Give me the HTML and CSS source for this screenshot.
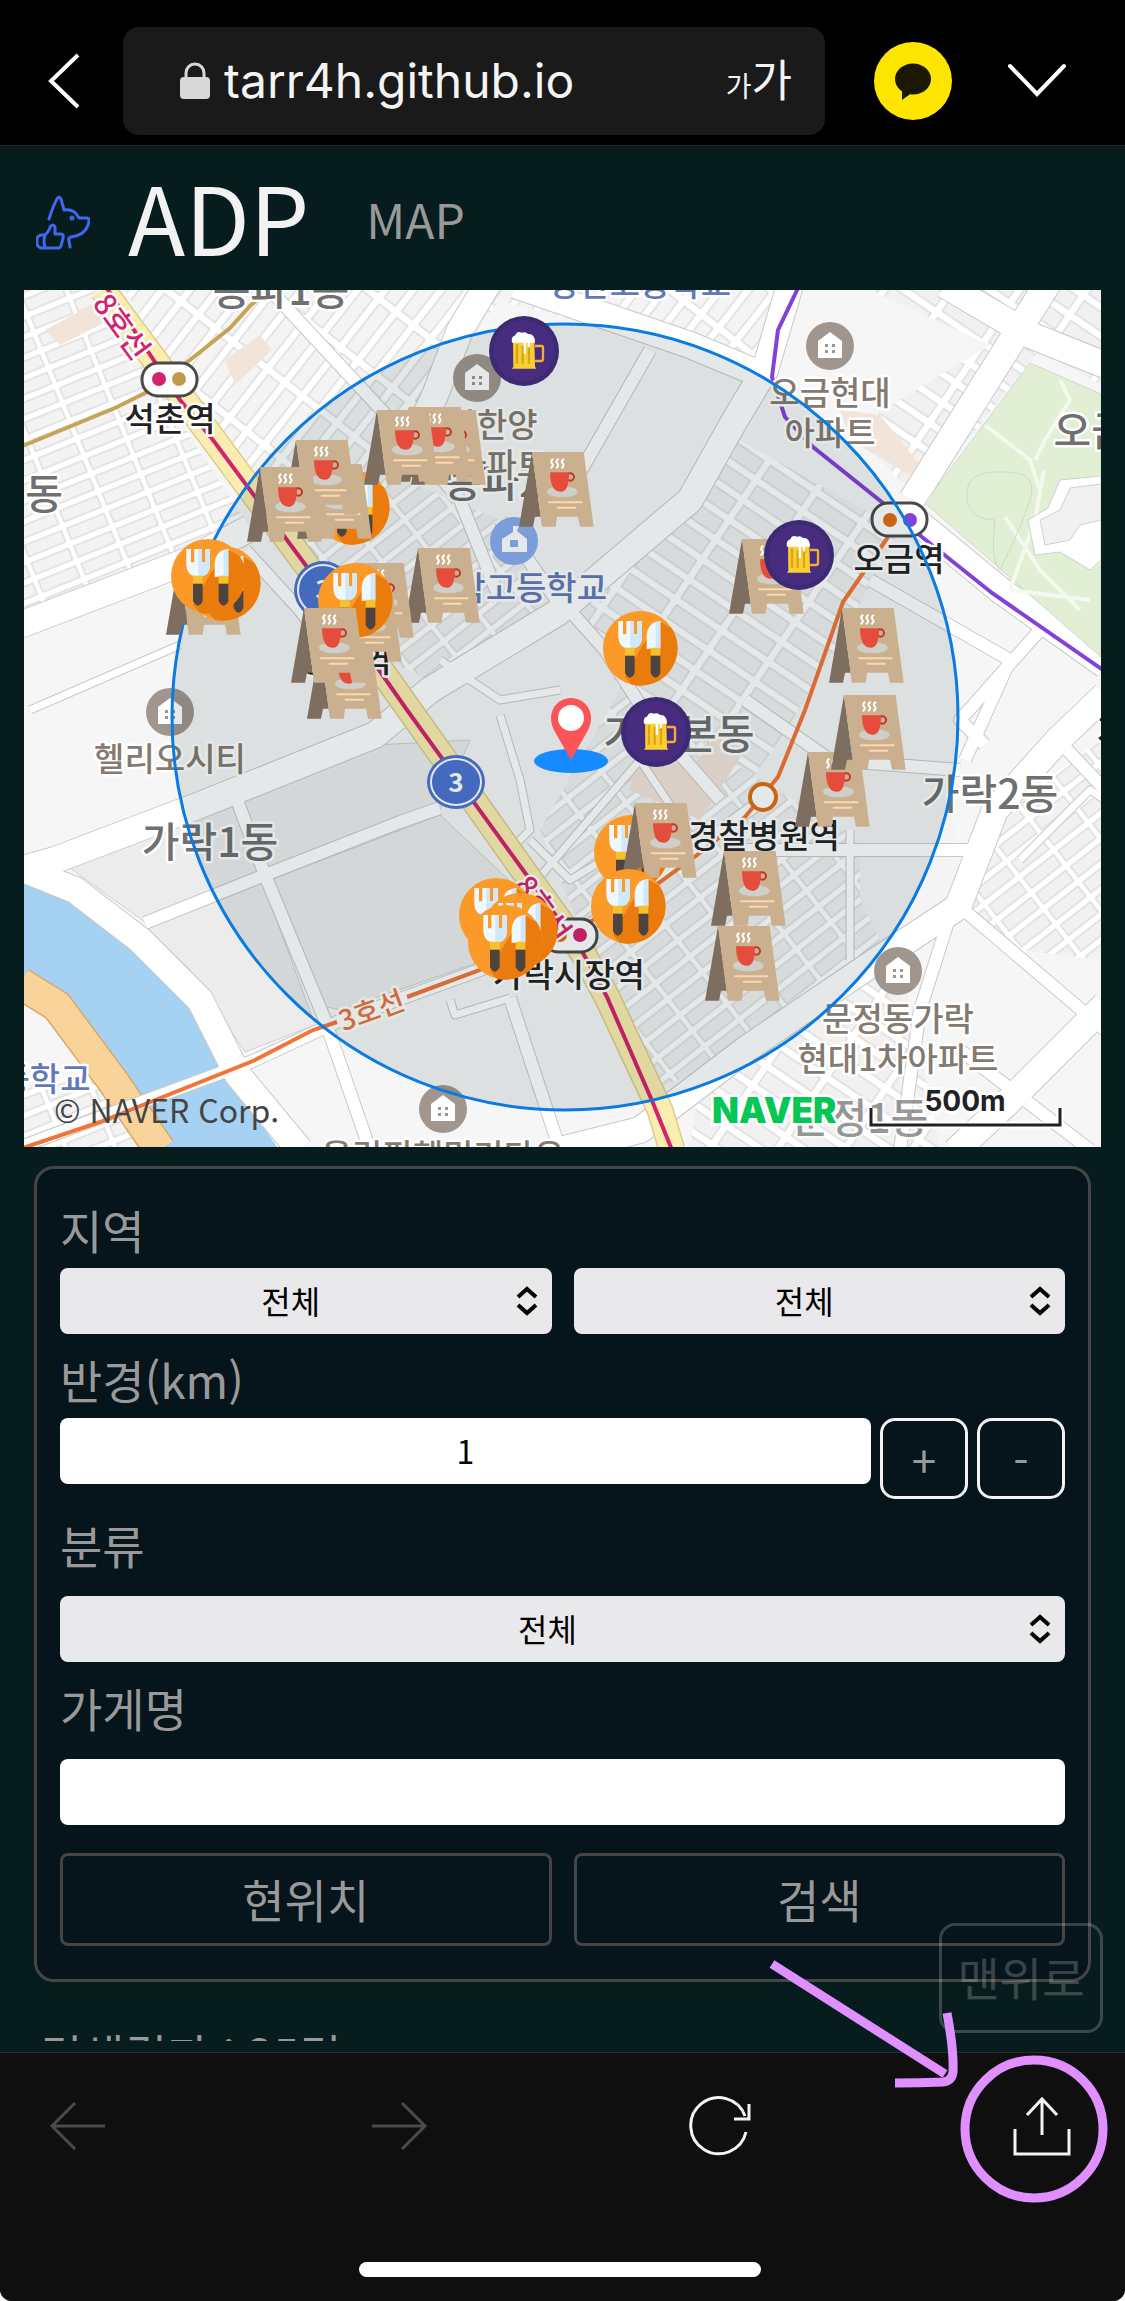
FILE: index.html
```html
<!DOCTYPE html>
<html lang="ko">
<head>
<meta charset="utf-8">
<meta name="viewport" content="width=device-width, initial-scale=1">
<title>ADP MAP</title>
<link rel="stylesheet" href="styles.css">
</head>
<body>
<div class="screen">
  <header class="topbar">
    <button class="icon-btn" type="button" aria-label="뒤로"><svg width="36" height="60" viewBox="0 0 36 60"><path d="M32 4 5 30 32 56" fill="none" stroke="#fff" stroke-width="4"/></svg></button>
    <div class="urlbar">
      <svg class="lock" width="30" height="38" viewBox="0 0 30 38"><rect y="15" width="30" height="22" rx="4" fill="#d8d8d8"/><path d="M6 17V11a9 9 0 0 1 18 0v6" fill="none" stroke="#d8d8d8" stroke-width="3"/></svg>
      <span class="url">tarr4h.github.io</span>
      <button class="text-size" type="button" aria-label="글자 크기"><small>가</small><span>가</span></button>
    </div>
    <button class="icon-btn talk" type="button" aria-label="채팅"><svg width="78" height="78" viewBox="0 0 78 78"><circle cx="39" cy="39" r="39" fill="#fee500"/><ellipse cx="39" cy="37" rx="18" ry="15.500" fill="#1b1903"/><path d="M28 44v14l11-8z" fill="#1b1903"/></svg></button>
    <button class="icon-btn" type="button" aria-label="닫기"><svg width="60" height="36" viewBox="0 0 60 36"><path d="M3 3 30 31 57 3" fill="none" stroke="#fff" stroke-width="4" stroke-linecap="round"/></svg></button>
  </header>

  <div class="viewport">
    <main class="page">
      <nav class="site-head">
        <svg width="54" height="56" viewBox="0 0 54 56" fill="none" stroke="#3f68ee" stroke-width="3" stroke-linecap="round" stroke-linejoin="round"><path d="M13 24Q17 11 21 4q2-4 4 0l3 11q10-2 15 8h8q2 0 2 3-2 14-18 16-3 1-2 4l1 6"/><circle cx="36" cy="23" r="1"/><path d="M9 40q5-5 5-8 3-4 5 0v7h6q3 0 2 4l-2 8q-1 2-3 2H5q-4-1-4-5v-4q0-3 4-4h4q-2 6 0 13"/></svg>
        <a class="brand" href="#">ADP</a>
        <a class="nav-link" href="#map">MAP</a>
      </nav>

      <svg id="map" class="map" viewBox="24 290 1077 857" role="img" aria-label="지도">
        <defs>
          <pattern id="b1" width="46" height="19" patternUnits="userSpaceOnUse" patternTransform="rotate(-22)"><rect width="46" height="19" fill="#fff"/><rect x="2" y="2" width="40" height="12" fill="#f3f3f3" stroke="#cfcfcf"/></pattern>
          <pattern id="b2" width="62" height="22" patternUnits="userSpaceOnUse" patternTransform="rotate(-52)"><rect width="62" height="22" fill="#fff"/><rect x="2" y="2" width="54" height="14" fill="#f4f4f4" stroke="#cfcfcf"/></pattern>
          <pattern id="b3" width="56" height="24" patternUnits="userSpaceOnUse" patternTransform="rotate(34)"><rect width="56" height="24" fill="#fff"/><rect x="3" y="3" width="48" height="16" fill="#f1f1f1" stroke="#cfcfcf"/></pattern>
          <pattern id="b4" width="44" height="20" patternUnits="userSpaceOnUse" patternTransform="rotate(-38)"><rect width="44" height="20" fill="#fff"/><rect x="2" y="2" width="38" height="13" fill="#f1f1f1" stroke="#cfcfcf"/></pattern>
          <g id="wide">
            <path d="M20 870 55 860 200 805 375 735 430 690 557 613 690 500 735 420 765 370 790 285"/>
            <path d="M490 280 460 330 435 395 400 470"/><path d="M515 285 690 345 762 375"/>
            <path d="M1050 280 912 500"/><path d="M945 285 1030 335 1105 365"/>
            <path d="M1105 695 1058 740 995 810 958 907 870 965 745 1050 640 1130 560 1150"/>
            <path d="M1105 1005 1010 1100 955 1152"/><path d="M20 868 75 890 140 940 200 1000 238 1075 300 1150"/>
            <path d="M915 520 1000 590 1105 665"/><path d="M20 625 190 560 250 528"/>
          </g>
          <g id="mid">
            <path d="M145 923 265 875 400 822 440 808"/><path d="M237 800 265 875 325 1020 370 1150"/><path d="M20 1147 253 1061 337 1022 480 970 590 925 763 800"/>
            <path d="M510 998 560 1150"/><path d="M650 350 570 490"/><path d="M565 605 605 650 650 720 720 800"/><path d="M745 700 830 760 960 770"/>
            <path d="M500 520 560 605"/><path d="M958 905 1105 1030"/><path d="M955 900 920 1010 900 1150"/><path d="M870 580 1010 660 965 760"/><path d="M960 1050 1090 1150"/>
            <path d="M1058 740 1105 790"/><path d="M740 850 970 850"/><path d="M245 550 300 610 330 650"/><path d="M1040 630 960 720 985 745"/><path d="M270 290 400 430 460 500 500 600"/>
          </g>
          <g id="small">
            <path d="M500 715 520 780 530 830 500 860"/><path d="M440 660 500 700 560 690"/><path d="M530 840 570 880 620 850"/><path d="M30 710 180 645"/><path d="M1020 860 1090 790 1105 800"/><path d="M450 1000 455 1015 510 998"/><path d="M520 900 640 760 700 850"/><path d="M850 830V960"/>
          </g>
          <symbol id="cafe" viewBox="0 0 225 225"><path d="M39 0 0 224h42l6-30h18l3 30z" fill="#7d6e5f"/><path d="M39 0h155l30 224h-41l-6-30h-63l-4 30H69z" fill="#cbb08f"/><ellipse cx="130" cy="119" rx="46" ry="17" fill="#cfcfc9"/><circle cx="154" cy="75" r="11" fill="none" stroke="#bd372c" stroke-width="6"/><path d="M93 61h57q0 58-22 58-34 4-35-58z" fill="#e64c3c"/><path d="M101 22q-8 6-2 12t-2 13M117 22q-8 6-2 12t-2 13M133 22q-8 6-2 12t-2 13" fill="none" stroke="#fff" stroke-width="6" stroke-linecap="round"/><path d="M90 151h98M116 167h52" stroke="#fdd7ad" stroke-width="6" stroke-linecap="round"/></symbol>
          <symbol id="food" viewBox="0 0 225 225"><circle cx="112" cy="112" r="112" fill="#fb9a28"/><path d="M172 32 206 52a112 112 0 0 1-120 169l-20-24 50-90z" fill="#ea7b0d"/><path d="M46 30h14v40h10V30h23v40h10V30h14v45q0 38-35 38T46 75z" fill="#eef8ff"/><path d="M82 30h11v40h10V30h14v45q0 38-35 38z" fill="#cfe8fb"/><path d="M172 30v83h-41V75q2-42 41-45z" fill="#eef8ff"/><path d="M158 34 172 30v83h-14z" fill="#cfe8fb"/><path d="M66 110h29v24H66zM143 110h29v24h-29z" fill="#f7c02e"/><path d="M66 134h29v52q-14 28-29 0zM143 134h29v52q-14 28-29 0z" fill="#4d4340"/></symbol>
          <symbol id="beer" viewBox="0 0 210 210"><circle cx="105" cy="105" r="105" fill="#3b2a74"/><circle cx="105" cy="105" r="92" fill="#472c7f"/><path d="M138 90h20q4 0 4 5v34q0 6-6 6h-18" fill="none" stroke="#f1ae35" stroke-width="7"/><path d="M72 70h64l2 82 4 6H69l4-6z" fill="#f9cf31"/><path d="M84 85v58M101 90v53M120 90v53" stroke="#dda516" stroke-width="7"/><path d="M69 80q-4-18 10-22 5-15 20-8 12-3 18 4 21-2 21 26h-15v14h-7V80h-5v34h-7V80z" fill="#fff"/></symbol>
          <symbol id="house" viewBox="0 0 48 48"><circle cx="24" cy="24" r="24" fill="#a0968e"/><path d="M12 36V19l12-9 12 9v17z" fill="#fff"/><path d="M19 22h3v3h-3zM26 22h3v3h-3zM19 28h3v3h-3zM26 28h3v3h-3z" fill="#a0968e"/></symbol>
        </defs>

        <rect x="24" y="290" width="1077" height="857" fill="#f6f6f6"/>
        <path d="M24 290H95L245 520 190 555 24 620z" fill="url(#b1)"/>
        <path d="M125 290H400L440 380 380 500 300 560 245 500z" fill="url(#b2)"/>
        <path d="M400 290H790L760 370 500 300 440 380z" fill="url(#b2)"/>
        <path d="M490 325 690 365 720 420 650 500 560 600 400 470 440 400z" fill="#f6f6f6"/>
        <path d="M380 470 500 520 550 600 430 680 340 640 300 540z" fill="url(#b4)"/>
        <path d="M870 290H1101V385L1040 350 920 500 850 430 990 345z" fill="url(#b3)"/>
        <path d="M740 440 900 530 840 640 780 740 700 850 600 650 560 600z" fill="url(#b3)"/>
        <path d="M870 600 960 670 950 750 850 690z" fill="#f6f6f6"/>
        <path d="M540 830 620 690 760 780 860 840 960 900 760 1050 650 1090 610 1000z" fill="url(#b4)"/>
        <path d="M860 765H950L960 910 890 960 860 900z" fill="#f4f4f4"/>
        <path d="M990 820 1101 740V960L1020 950 960 905z" fill="url(#b4)"/>
        <path d="M700 1080 900 960 940 1147H690z" fill="url(#b3)"/>
        <path d="M45 330 100 300 110 320 60 345zM225 360 260 335 272 350 235 385zM640 740 690 770 720 730 745 750 700 820 630 790zM840 410 880 415 920 465 910 475 850 440z" fill="#f3e4da"/>
        <path d="M70 868 235 804 265 875 145 922zM147 928 262 880 315 1025 245 1052 190 970zM243 800 375 745 470 740 440 810 268 870zM270 880 440 815 530 900 500 955 340 1010 320 1005z" fill="#ececec" stroke="#d0d0d0"/>
        <path d="M24 885 40 879 82 900 133 943 197 1010 218 1060 277 1147H24z" fill="#a5d1f2"/>
        <path d="M24 1000 60 1030 120 1110 145 1147H24z" fill="#f6f6f6"/>
        <path d="M24 1085 95 1072 125 1105 140 1147H24z" fill="url(#b1)"/>
        <path d="M20 983 57 1006 112 1080 160 1150" fill="none" stroke="#dda763" stroke-width="33"/>
        <path d="M20 983 57 1006 112 1080 160 1150" fill="none" stroke="#f9d49a" stroke-width="30"/>
        <g fill="none" stroke-linejoin="round">
          <g stroke="#c9c9c9"><use href="#small" stroke-width="9"/><use href="#mid" stroke-width="14"/><use href="#wide" stroke-width="28"/></g>
          <g stroke="#fff"><use href="#small" stroke-width="7"/><use href="#mid" stroke-width="12"/><use href="#wide" stroke-width="26"/></g>
        </g>
        <path d="M1030 363 1101 394V657L925 503z" fill="#e1efd5" stroke="#cfd8c8"/>
        <path d="M985 425 1030 460 1040 490M1044 470 1035 520 1010 590M1005 517 1040 570 1080 610M1010 590 1090 600M1060 380 1070 400 1045 440 1035 460" fill="none" stroke="#f4f8ef" stroke-width="4"/>
        <path d="M968 505Q960 470 1000 472 1040 470 1030 500 1020 530 1000 570 990 560 995 520 975 520 968 505z" fill="none" stroke="#cfdcc6"/>
        <path d="M1101 476 1060 480 1048 508 1028 520 1035 555 1060 552 1090 570 1101 560z" fill="#fff" stroke="#d0d0d0"/>
        <path d="M1101 484 1070 488 1060 510 1040 520 1045 545 1070 540 1080 525 1101 520z" fill="#f1f1f1" stroke="#d0d0d0"/>

        <path d="M103 290 310 570 523 870 583 953 607 997 660 1110 672 1150" fill="none" stroke="#dccd8c" stroke-width="27"/>
        <path d="M103 290 310 570 523 870 583 953 607 997 660 1110 672 1150" fill="none" stroke="#fbedb0" stroke-width="24"/>
        <g fill="none" stroke-width="4">
          <path d="M20 447 115 408 145 393 190 360 230 328 250 306 272 286" stroke="#c7a355"/>
          <path d="M103 282 145 347 180 400 213 440 307 567 407 710 523 870 583 953 607 997 653 1103 672 1150" stroke="#d4236d"/>
          <path d="M20 1149 100 1122 253 1061 313 1030 337 1022M407 997 480 970 593 920 660 882 697 855 745 817 778 777 805 710 843 602 888 537" stroke="#f27438"/>
          <path d="M799 286 778 330 772 377 785 417 813 447 883 503 922 537 992 593 1103 670" stroke="#8341d8"/>
        </g>
        <circle cx="763" cy="797" r="13" fill="#fff" stroke="#df6e12" stroke-width="4"/>
        <g fill="#fff" stroke="#4a4a4a" stroke-width="3"><rect x="142" y="363" width="55" height="33" rx="16"/><rect x="872" y="503" width="55" height="33" rx="16"/><rect x="542" y="919" width="55" height="33" rx="16"/></g>
        <circle cx="159" cy="379" r="7" fill="#d4236d"/><circle cx="179" cy="379" r="7" fill="#c09a4d"/><circle cx="890" cy="520" r="7" fill="#df6e12"/><circle cx="910" cy="520" r="7" fill="#8341d8"/><circle cx="560" cy="935" r="7" fill="#df6e12"/><circle cx="580" cy="935" r="7" fill="#d4236d"/>
        <g fill="#4c73d2"><circle cx="323" cy="590" r="29"/><ellipse cx="456" cy="782" rx="29" ry="27"/></g>
        <g fill="none" stroke="#fff" stroke-width="2"><circle cx="323" cy="590" r="25"/><ellipse cx="456" cy="782" rx="25" ry="23"/></g>
        <g class="num"><text x="323" y="599">3</text><text x="456" y="792">3</text></g>
        <use href="#house" x="453" y="354" width="48" height="48"/><use href="#house" x="806" y="322" width="48" height="48"/><use href="#house" x="146" y="688" width="48" height="48"/><use href="#house" x="419" y="1085" width="48" height="48"/><use href="#house" x="874" y="947" width="48" height="48"/>
        <circle cx="514" cy="541" r="24" fill="#8aadf0"/><path d="M502 552v-13l11-7v-6h6l-2 5 10 8v13z" fill="#fff"/><rect x="510" y="540" width="8" height="7" fill="#8aadf0"/>

        <g class="lbl station"><text x="170" y="431">석촌역</text><text x="899" y="571">오금역</text><text x="569" y="987">가락시장역</text><text x="346" y="672">송파역</text><text x="764" y="848">경찰병원역</text><text x="1112" y="743">가</text></g>
        <g class="lbl district"><text x="281" y="305">송파1동</text><text x="44" y="509">동</text><text x="512" y="497">송파2동</text><text x="1110" y="446">오금동</text><text x="210" y="857">가락1동</text><text x="679" y="749">가락본동</text><text x="990" y="809">가락2동</text><text x="860" y="1133" opacity=".7">문정1동</text></g>
        <g class="lbl place"><text x="477" y="437">송파한양</text><text x="477" y="477">2차아파트</text><text x="830" y="405">오금현대</text><text x="830" y="445">아파트</text><text x="170" y="771">헬리오시티</text><text x="898" y="1031">문정동가락</text><text x="898" y="1071">현대1차아파트</text><text x="443" y="1168">올림픽훼밀리타운</text></g>
        <g class="lbl school"><text x="640" y="296">방산고등학교</text><text x="516" y="600">가락고등학교</text><text x="45" y="1091">등학교</text></g>
        <g class="lbl line8"><text transform="translate(113 333) rotate(54)">8호선</text><text transform="translate(534 915) rotate(54)">8호선</text></g>
        <g class="lbl line3"><text transform="translate(375 1020) rotate(-20)">3호선</text></g>

        <circle cx="565" cy="717" r="393" fill="#00201c" fill-opacity=".1" stroke="#0a7be0" stroke-width="3"/>

        <ellipse cx="571" cy="761" rx="37" ry="12" fill="#168aff"/><path d="M571 760 555 732Q551 725 551 718a20 20 0 0 1 40 0q0 7-4 14z" fill="#fa5456"/><circle cx="571" cy="718" r="13" fill="#fff"/>

        <g>
          <use href="#food" x="315" y="470" width="75" height="75"/><use href="#cafe" x="297" y="464" width="75" height="75"/><use href="#cafe" x="283" y="440" width="75" height="75"/><use href="#cafe" x="247" y="467" width="75" height="75"/>
          <use href="#cafe" x="411" y="410" width="75" height="75"/><use href="#cafe" x="396" y="407" width="75" height="75"/><use href="#cafe" x="364" y="410" width="75" height="75"/>
          <use href="#cafe" x="519" y="452" width="75" height="75"/><use href="#cafe" x="405" y="548" width="75" height="75"/><use href="#cafe" x="339" y="563" width="75" height="75"/><use href="#cafe" x="327" y="587" width="75" height="75"/><use href="#food" x="318" y="563" width="75" height="75"/>
          <use href="#cafe" x="307" y="644" width="75" height="75"/><use href="#cafe" x="291" y="608" width="75" height="75"/>
          <use href="#cafe" x="166" y="560" width="75" height="75"/><use href="#food" x="186" y="546" width="75" height="75"/><use href="#food" x="171" y="539" width="75" height="75"/>
          <use href="#cafe" x="729" y="539" width="75" height="75"/><use href="#cafe" x="829" y="608" width="75" height="75"/><use href="#cafe" x="795" y="752" width="75" height="75"/><use href="#cafe" x="831" y="695" width="75" height="75"/>
          <use href="#cafe" x="711" y="851" width="75" height="75"/><use href="#cafe" x="705" y="926" width="75" height="75"/>
          <use href="#food" x="603" y="611" width="75" height="75"/><use href="#food" x="594" y="815" width="75" height="75"/><use href="#cafe" x="622" y="803" width="75" height="75"/><use href="#food" x="591" y="869" width="75" height="75"/>
          <use href="#food" x="459" y="878" width="75" height="75"/><use href="#food" x="483" y="893" width="75" height="75"/><use href="#food" x="468" y="905" width="75" height="75"/>
          <use href="#beer" x="489" y="316" width="70" height="70"/><use href="#beer" x="764" y="520" width="70" height="70"/><use href="#beer" x="621" y="697" width="70" height="70"/>
        </g>
        <text class="credit" x="54" y="1123">© NAVER Corp.</text>
        <text class="naver" x="712" y="1123">NAVER</text>
        <path d="M871 1108v17h189v-17" fill="none" stroke="#fff" stroke-width="7"/><path d="M871 1108v17h189v-17" fill="none" stroke="#222" stroke-width="3"/>
        <text class="scale" x="965" y="1111">500m</text>
      </svg>

      <form class="search" onsubmit="return false">
        <div class="field">
          <label for="sido">지역</label>
          <div class="row pair">
            <div class="select"><select id="sido"><option>전체</option></select><svg width="24" height="30" viewBox="0 0 24 30"><path d="M3 11 12 3l9 8M3 19l9 8 9-8"/></svg></div>
            <div class="select"><select id="gugun" aria-label="시군구"><option>전체</option></select><svg width="24" height="30" viewBox="0 0 24 30"><path d="M3 11 12 3l9 8M3 19l9 8 9-8"/></svg></div>
          </div>
        </div>
        <div class="field">
          <label for="radius">반경(km)</label>
          <div class="row radius"><input id="radius" type="text" value="1"><button class="step" type="button">+</button><button class="step" type="button">-</button></div>
        </div>
        <div class="field spaced">
          <label for="kind">분류</label>
          <div class="select"><select id="kind"><option>전체</option></select><svg width="24" height="30" viewBox="0 0 24 30"><path d="M3 11 12 3l9 8M3 19l9 8 9-8"/></svg></div>
        </div>
        <div class="field spaced">
          <label for="shop">가게명</label>
          <input id="shop" type="text">
        </div>
        <div class="row pair actions"><button type="button">현위치</button><button type="submit">검색</button></div>
      </form>
      <h2 class="result">검색결과 : 25건</h2>
    </main>
    <button class="to-top" type="button">맨위로</button>
  </div>

  <footer class="toolbar">
    <div class="tools">
      <button class="icon-btn" type="button" aria-label="이전"><svg width="60" height="60" viewBox="0 0 60 60" fill="none" stroke="#4a4a4a" stroke-width="3"><path d="M57 30H4M27 7 4 30l23 23"/></svg></button>
      <button class="icon-btn" type="button" aria-label="다음"><svg width="60" height="60" viewBox="0 0 60 60" fill="none" stroke="#4a4a4a" stroke-width="3"><path d="M3 30h53M33 7l23 23-23 23"/></svg></button>
      <button class="icon-btn" type="button" aria-label="새로고침"><svg width="62" height="60" viewBox="0 0 62 60" fill="none" stroke="#f4f4f4" stroke-width="3"><path d="M57 36A28 28 0 1 1 56 20M60 8v15H45"/></svg></button>
      <button class="icon-btn" type="button" aria-label="공유"><svg width="60" height="60" viewBox="0 0 60 60" fill="none" stroke="#f4f4f4" stroke-width="3"><path d="M3 33v25h54V33M30 39V4M15 19 30 3l15 16"/></svg></button>
    </div>
    <div class="home"></div>
    <svg class="note" width="360" height="250" viewBox="760 1955 360 250" fill="none" stroke="#e08fff" stroke-width="9"><path d="M772 1964 945 2074"/><path d="M947 2013Q954 2050 953 2072 952 2081 943 2082 920 2083 895 2083"/><circle cx="1034" cy="2129" r="69"/></svg>
  </footer>
</div>
</body>
</html>
```
FILE: styles.css
```css
* { box-sizing: border-box; }
body {
  margin: 0;
  background: #fff;
  color: #999;
  font-family: "Noto Sans CJK KR", "Noto Sans", sans-serif;
}
button, input, select { font: inherit; color: inherit; }
button { background: none; border: 0; padding: 0; cursor: pointer; }
svg { display: block; }
a { text-decoration: none; }

.screen {
  display: flex;
  flex-direction: column;
  height: 100vh;
  overflow: hidden;
  background: #071c1d;
  border-radius: 0 0 12px 12px;
}

/* browser bar */
.topbar {
  display: flex;
  align-items: center;
  flex: none;
  padding: 27px 58px 10px 46px;
  gap: 41px;
  background: #000;
  border-bottom: 1px solid #1f2a2b;
}
.urlbar {
  display: flex;
  align-items: center;
  flex: 1;
  height: 108px;
  padding: 0 33px 0 57px;
  border-radius: 16px;
  background: #1a1a1a;
  color: #f4f4f4;
}
.url { flex: 1; padding-left: 14px; font: 48px/60px Inter, sans-serif; }
.text-size { display: flex; align-items: baseline; font-size: 44px; line-height: 60px; }
.text-size small { font-size: 28px; }
.talk { margin: 0 14px 0 8px; }

/* page */
.viewport { position: relative; flex: 1; min-height: 0; padding-bottom: 11px; }
.page { height: 100%; overflow: hidden; }
.site-head { display: flex; align-items: center; height: 144px; padding: 0 36px; }
.site-head svg { margin-top: 10px; }
.brand { margin-left: 38px; color: #f2f2f2; font-size: 94px; line-height: 138px; height: 144px; }
.nav-link { margin-left: 57px; color: #999; font-size: 48px; line-height: 148px; }

/* map */
.map { width: calc(100% - 48px); margin: 0 24px; }
.lbl text { text-anchor: middle; }
.lbl { font-size: 33px; font-weight: 500; paint-order: stroke; stroke: #fff; stroke-width: 5px; stroke-linejoin: round; }
.station { fill: #222; }
.district { font-size: 41px; fill: #707070; }
.place { fill: #857a70; }
.school { fill: #6279b8; }
.line8 { font-size: 30px; fill: #d4236d; }
.line3 { font-size: 28px; fill: #e8743c; }
.num { font-size: 26px; font-weight: 700; fill: #fff; text-anchor: middle; }
.credit { font-size: 32px; fill: #444; }
.naver { font: 900 35px Inter, sans-serif; fill: #06c755; paint-order: stroke; stroke: #fff; stroke-width: 5px; }
.scale { font: 700 28px Inter, sans-serif; fill: #222; text-anchor: middle; paint-order: stroke; stroke: #fff; stroke-width: 6px; }

/* search form */
.search {
  margin: 19px 34px 0;
  padding: 29px 23px 33px;
  border: 3px solid #454545;
  border-radius: 20px;
  background: #06141b;
  font-size: 46px;
}
.field + .field { margin-top: 14px; }
.field label { display: block; line-height: 62px; padding-bottom: 8px; }
.spaced label { margin-bottom: 13px; }
.row { display: flex; align-items: flex-start; }
.pair { gap: 22px; }
.pair > * { flex: 1; }
.radius { gap: 9px; }
.radius input { flex: 1; min-width: 0; text-align: center; }
.search input, .search select {
  display: block;
  width: 100%;
  height: 66px;
  border: 0;
  border-radius: 8px;
  padding: 0 20px 3px;
  background: #fff;
  color: #000;
  font-size: 32px;
}
.select { position: relative; }
.search select { appearance: none; padding: 0 40px 3px 10px; background: #e9e9eb; text-align-last: center; }
.select svg { position: absolute; right: 13px; top: 18px; fill: none; stroke: #000; stroke-width: 4; pointer-events: none; }
.step {
  flex: none;
  width: 88px;
  height: 81px;
  border: 3px solid #f2f2f2;
  border-radius: 15px;
  font-size: 44px;
  line-height: 70px;
}
.actions { margin-top: 28px; }
.actions button { height: 93px; padding-bottom: 4px; border: 3px solid #454545; border-radius: 8px; line-height: 80px; }
.result { margin: 36px 40px 0; font-size: 46px; font-weight: 400; line-height: 70px; }
.to-top {
  position: absolute;
  right: 22px;
  bottom: 19px;
  width: 164px;
  height: 110px;
  padding-bottom: 4px;
  border: 3px solid #fff;
  border-radius: 16px;
  color: #fff;
  font-size: 46px;
  line-height: 96px;
  white-space: nowrap;
  opacity: .2;
}

/* bottom bar */
.toolbar {
  position: relative;
  flex: none;
  padding: 43px 53px 24px 48px;
  border-top: 1px solid #2c2c2c;
  background: #0f0f0f;
}
.tools { display: flex; justify-content: space-between; }
.home { width: 402px; height: 15px; margin: 106px auto 0; border-radius: 8px; background: #fff; }
.note { position: absolute; right: 5px; top: -98px; pointer-events: none; }
```
